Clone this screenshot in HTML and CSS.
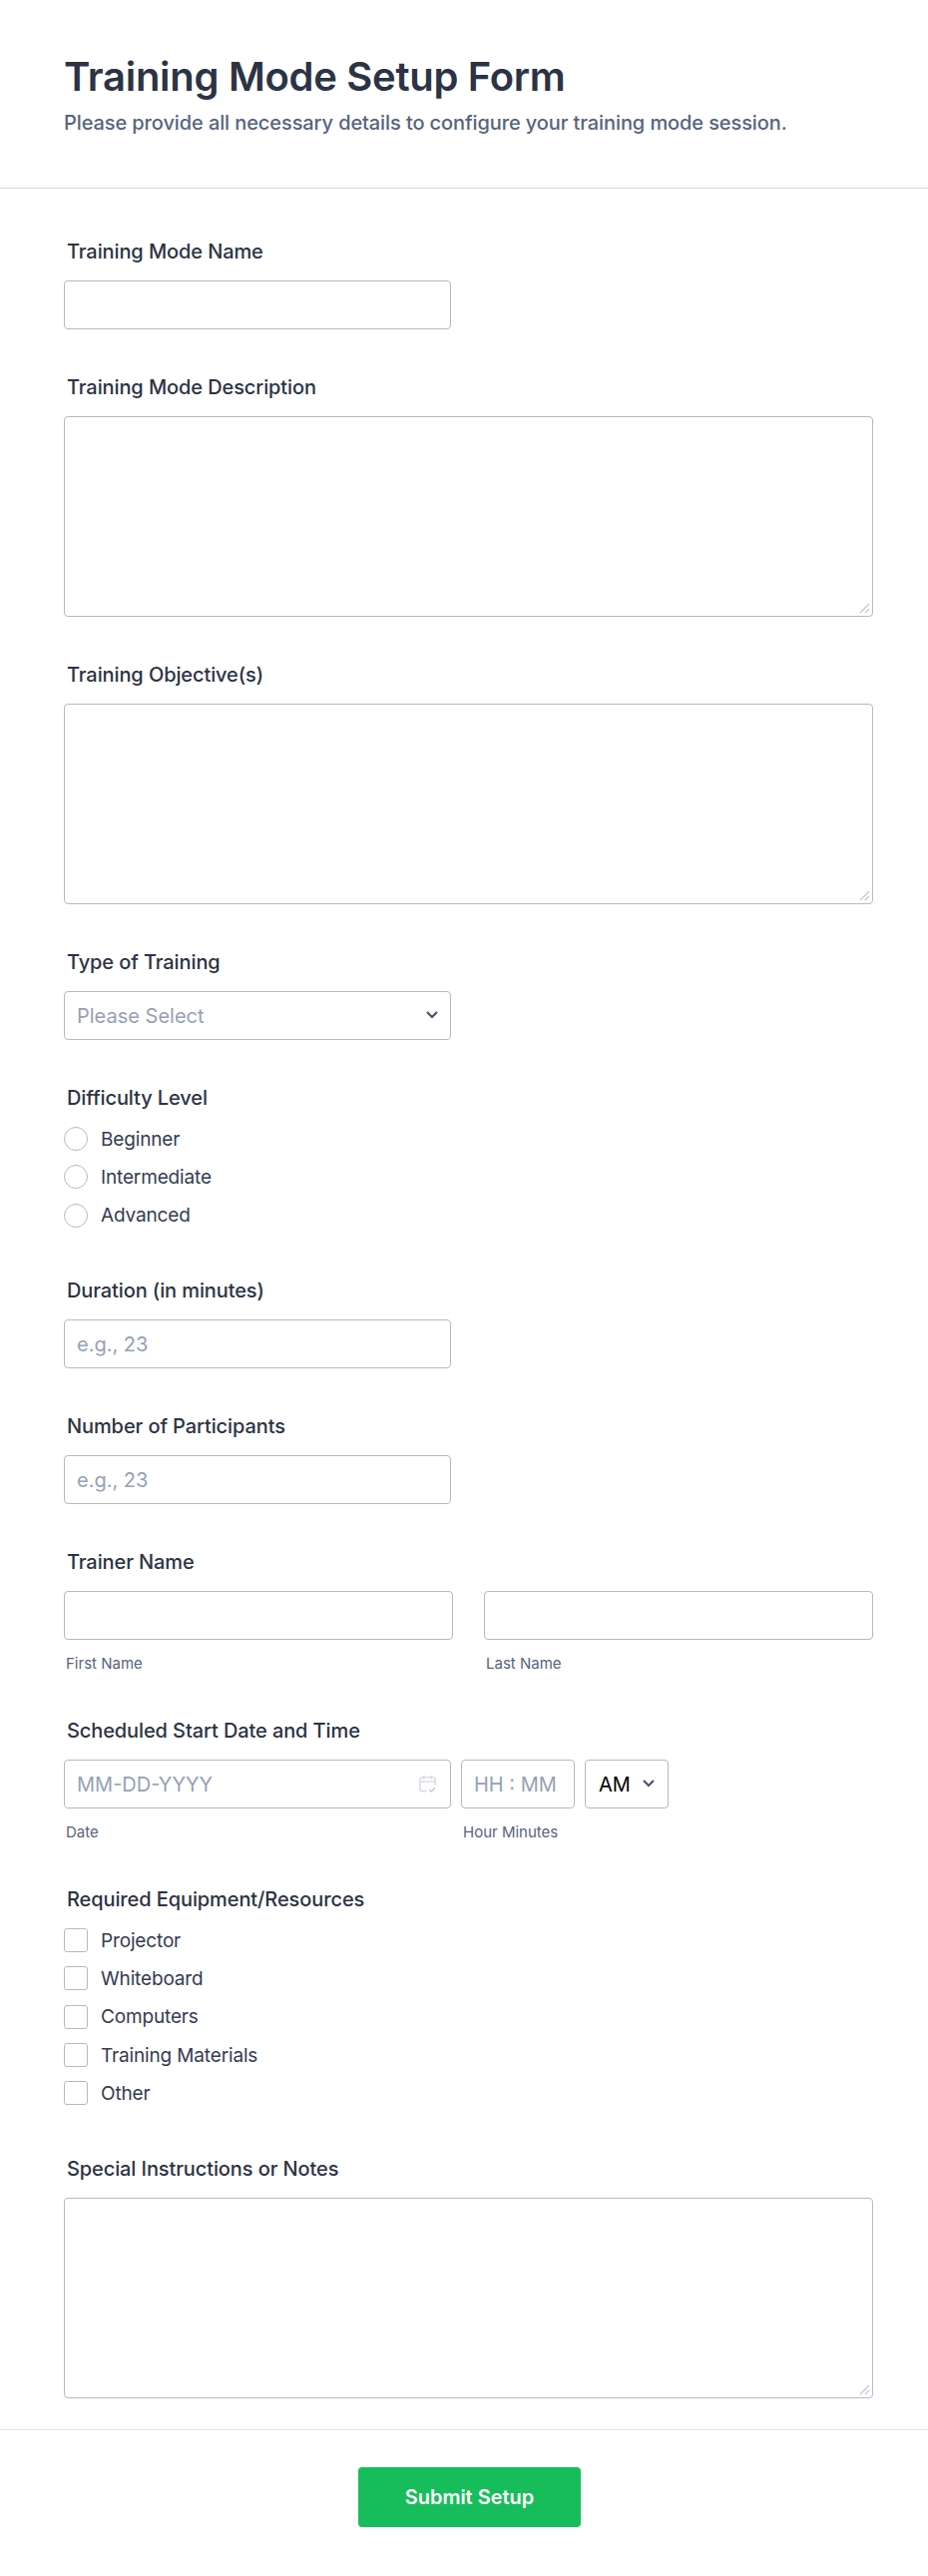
FILE: index.html
```html
<!doctype html>
<html>
<head>
<meta charset="utf-8">
<title>Training Mode Setup Form</title>
<link rel="stylesheet" href="styles.css">
</head>
<body>
<form class="form">
  <header class="form-header">
    <h1>Training Mode Setup Form</h1>
    <p>Please provide all necessary details to configure your training mode session.</p>
  </header>

  <div class="form-body">
    <div class="field">
      <label class="field-label">Training Mode Name</label>
      <input class="input input-half" type="text">
    </div>

    <div class="field">
      <label class="field-label">Training Mode Description</label>
      <div class="select-wrap">
        <textarea class="input input-area"></textarea>
        <svg class="grip" width="11" height="11" viewBox="0 0 11 11"><path d="M1 10 10 1M6 10l4-4" stroke="#c3c6d3" stroke-width="1.2"/></svg>
      </div>
    </div>

    <div class="field">
      <label class="field-label">Training Objective(s)</label>
      <div class="select-wrap">
        <textarea class="input input-area"></textarea>
        <svg class="grip" width="11" height="11" viewBox="0 0 11 11"><path d="M1 10 10 1M6 10l4-4" stroke="#c3c6d3" stroke-width="1.2"/></svg>
      </div>
    </div>

    <div class="field">
      <label class="field-label">Type of Training</label>
      <div class="select-wrap input-half">
        <select class="input select-input">
          <option>Please Select</option>
        </select>
        <svg class="chevron" width="12" height="8" viewBox="0 0 12 8"><path d="M1 1l5 5 5-5" fill="none" stroke="#4c536f" stroke-width="2.2"/></svg>
      </div>
    </div>

    <div class="field">
      <label class="field-label">Difficulty Level</label>
      <div class="options options-radio">
        <label class="option"><span class="radio"></span>Beginner</label>
        <label class="option"><span class="radio"></span>Intermediate</label>
        <label class="option"><span class="radio"></span>Advanced</label>
      </div>
    </div>

    <div class="field">
      <label class="field-label">Duration (in minutes)</label>
      <input class="input input-half" type="text" placeholder="e.g., 23">
    </div>

    <div class="field">
      <label class="field-label">Number of Participants</label>
      <input class="input input-half" type="text" placeholder="e.g., 23">
    </div>

    <div class="field">
      <label class="field-label">Trainer Name</label>
      <div class="name-row">
        <div>
          <input class="input" type="text">
          <span class="sublabel">First Name</span>
        </div>
        <div>
          <input class="input" type="text">
          <span class="sublabel">Last Name</span>
        </div>
      </div>
    </div>

    <div class="field">
      <label class="field-label">Scheduled Start Date and Time</label>
      <div class="date-row">
        <div class="date-col">
          <div class="select-wrap">
            <input class="input" type="text" placeholder="MM-DD-YYYY">
            <svg class="calendar" width="17" height="19" viewBox="0 0 18 20" fill="none" stroke="#d5d8e2" stroke-width="1.5"><path d="M8 17.5H3a2 2 0 0 1-2-2V5a2 2 0 0 1 2-2h12a2 2 0 0 1 2 2v6"/><path d="M1 7.5h16M5 1v4M13 1v4"/><path d="m11 16 2 2 4-4" stroke="#c3c7d6"/></svg>
          </div>
          <span class="sublabel">Date</span>
        </div>
        <div class="time-col">
          <input class="input" type="text" placeholder="HH : MM">
          <span class="sublabel">Hour Minutes</span>
        </div>
        <div class="ampm-col">
          <div class="select-wrap">
            <select class="input ampm-input">
              <option>AM</option>
            </select>
            <svg class="chevron chevron-small" width="12" height="8" viewBox="0 0 12 8"><path d="M1 1l5 5 5-5" fill="none" stroke="#4c536f" stroke-width="2.2"/></svg>
          </div>
        </div>
      </div>
    </div>

    <div class="field">
      <label class="field-label">Required Equipment/Resources</label>
      <div class="options">
        <label class="option"><span class="check"></span>Projector</label>
        <label class="option"><span class="check"></span>Whiteboard</label>
        <label class="option"><span class="check"></span>Computers</label>
        <label class="option"><span class="check"></span>Training Materials</label>
        <label class="option"><span class="check"></span>Other</label>
      </div>
    </div>

    <div class="field">
      <label class="field-label">Special Instructions or Notes</label>
      <div class="select-wrap">
        <textarea class="input input-area"></textarea>
        <svg class="grip" width="11" height="11" viewBox="0 0 11 11"><path d="M1 10 10 1M6 10l4-4" stroke="#c3c6d3" stroke-width="1.2"/></svg>
      </div>
    </div>
  </div>

  <footer class="form-footer">
    <button class="submit" type="button">Submit Setup</button>
  </footer>
</form>
</body>
</html>
```

FILE: styles.css
```css
* {
  box-sizing: border-box;
}
body {
  margin: 0;
  background: #fff;
  color: #2c3345;
  font-family: "Inter", "Liberation Sans", sans-serif;
}
.form-header {
  padding: 52px 64px 51px;
  border-bottom: 1px solid #d8dae9;
}
.form-header h1 {
  margin: 0;
  font-size: 40px;
  line-height: 50px;
  font-weight: 600;
  letter-spacing: -0.3px;
}
.form-header p {
  margin: 7px 0 0;
  font-size: 20px;
  line-height: 28px;
  color: #57647e;
  font-weight: 500;
  letter-spacing: -0.1px;
}
.form-body {
  padding: 51px 55px 31px 64px;
  display: flex;
  flex-direction: column;
  gap: 46px;
}
.field-label {
  display: block;
  margin: 0 0 17px 3px;
  font-size: 20px;
  line-height: 24px;
  font-weight: 500;
  letter-spacing: -0.1px;
}
.input {
  display: block;
  width: 100%;
  height: 49px;
  padding: 0 12px;
  border: 1px solid #b4b9c8;
  border-radius: 4px;
  background: #fff;
  color: #2c3345;
  font-family: inherit;
  font-size: 20px;
  outline: none;
}
.input::placeholder {
  color: #94a1b5;
  opacity: 1;
}
.input-half {
  width: 388px;
}
.input-area {
  height: 201px;
  padding: 10px 12px;
  resize: none;
}
.select-wrap {
  position: relative;
}
.grip {
  position: absolute;
  right: 3px;
  bottom: 3px;
}
.select-input {
  appearance: none;
  color: #94a1b5;
}
.chevron {
  position: absolute;
  top: 20px;
  right: 13px;
}
.options {
  display: flex;
  flex-direction: column;
  gap: 14.33px;
  margin-bottom: 5.4px;
}
.options-radio {
  margin-top: 1px;
}
.option {
  display: flex;
  align-items: center;
  gap: 13px;
  height: 24px;
  font-size: 19px;
  letter-spacing: -0.15px;
  color: #343c52;
}
.radio,
.check {
  flex: none;
  width: 24px;
  height: 24px;
  border: 1px solid #b4b9c8;
  background: #fff;
}
.radio {
  border-radius: 50%;
}
.check {
  border-radius: 3px;
}
.name-row {
  display: grid;
  grid-template-columns: 390px 390px;
  column-gap: 31px;
}
.sublabel {
  display: block;
  margin: 15px 0 0 2px;
  font-size: 15px;
  line-height: 18px;
  color: #57647e;
}
.date-row {
  display: flex;
  gap: 10px;
}
.date-col {
  width: 388px;
}
.time-col {
  width: 114px;
}
.ampm-col {
  width: 84px;
}
.calendar {
  position: absolute;
  top: 15px;
  right: 15px;
}
.ampm-input {
  appearance: none;
  padding-left: 13px;
  color: #000;
}
.chevron-small {
  right: 14px;
}
.form-footer {
  padding: 37px 55px 49px 66px;
  border-top: 1px solid #e0e4ec;
  display: flex;
  justify-content: center;
}
.submit {
  width: 223px;
  height: 60px;
  border: 0;
  border-radius: 4px;
  background: #18bd5b;
  color: #fff;
  font-family: inherit;
  font-size: 20px;
  font-weight: 600;
}
```
